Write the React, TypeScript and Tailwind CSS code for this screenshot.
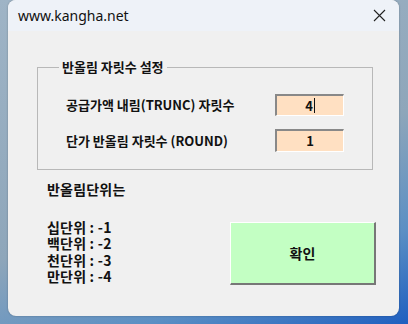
import React from "react";

export default function App() {
  const kfont = { fontFamily: '"Noto Sans CJK KR", "Noto Sans", sans-serif' };
  return (
    <div
      className="w-[408px] h-[324px] overflow-hidden bg-[linear-gradient(160deg,#9fb4c6_0%,#8ea6ba_55%,#5b8fc4_80%,#1f5fc0_100%)] flex"
      style={kfont}
    >
      <div className="ml-[8px] w-[391px] h-[316px] rounded-[8px] overflow-hidden bg-[#f0f0f0] flex flex-col shadow-[0_0_2px_rgba(0,0,0,0.3)]">
        <div className="h-[31px] bg-[#eef2f8] flex items-center justify-between pl-[10px] pr-[9px] shrink-0">
          <span className="text-[14px] text-[#111] leading-none" style={{ fontFamily: '"Noto Sans", sans-serif' }}>
            www.kangha.net
          </span>
          <svg width="13" height="13" viewBox="0 0 13 13" className="mr-[4px]">
            <path d="M1 1 L12 12 M12 1 L1 12" stroke="#222" strokeWidth="1.1" />
          </svg>
        </div>
        <div className="flex flex-col pl-[29px] pr-[24px]">
          <fieldset className="mt-[28px] mr-[2px] border border-[#b8b8b8] h-[111px] px-[12px]">
            <legend className="px-[3px] ml-[9px] text-[13px] font-bold text-[#111] leading-[16px]">
              반올림 자릿수 설정
            </legend>
            <div className="flex flex-col mt-[19px] gap-[13px]">
              <div className="flex items-center">
                <span className="w-[225px] pl-[16px] text-[13px] font-bold text-[#111]">공급가액 내림(TRUNC) 자릿수</span>
                <div className="w-[69px] h-[22px] bg-[#ffe0c2] border-t-2 border-l-2 border-t-[#888] border-l-[#888] border-b border-r border-b-white border-r-white flex items-center justify-center text-[13px] font-bold text-[#111]">
                  4<span className="inline-block w-[1px] h-[15px] bg-[#111] ml-[1px]" />
                </div>
              </div>
              <div className="flex items-center">
                <span className="w-[225px] pl-[16px] text-[13px] font-bold text-[#111]">단가 반올림 자릿수 (ROUND)</span>
                <div className="w-[69px] h-[23px] bg-[#ffe0c2] border-t-2 border-l-2 border-t-[#888] border-l-[#888] border-b border-r border-b-white border-r-white flex items-center justify-center text-[13px] font-bold text-[#111]">
                  1
                </div>
              </div>
            </div>
          </fieldset>
          <div className="flex mt-[9px]">
            <div className="flex flex-col pl-[10px] text-[14px] font-bold text-[#111] leading-[16.5px] tracking-[0.2px]">
              <span className="mt-[2px]">반올림단위는</span>
              <span className="mt-[21px]">십단위 : -1</span>
              <span>백단위 : -2</span>
              <span>천단위 : -3</span>
              <span>만단위 : -4</span>
            </div>
            <div className="ml-auto mt-[43px] w-[146px] h-[63px] bg-[#c3ffc3] border-t border-l border-t-white border-l-white border-b-2 border-r-2 border-b-[#777] border-r-[#777] flex items-center justify-center text-[14px] font-bold text-[#111] mr-[-1px]">
              확인
            </div>
          </div>
        </div>
      </div>
    </div>
  );
}
